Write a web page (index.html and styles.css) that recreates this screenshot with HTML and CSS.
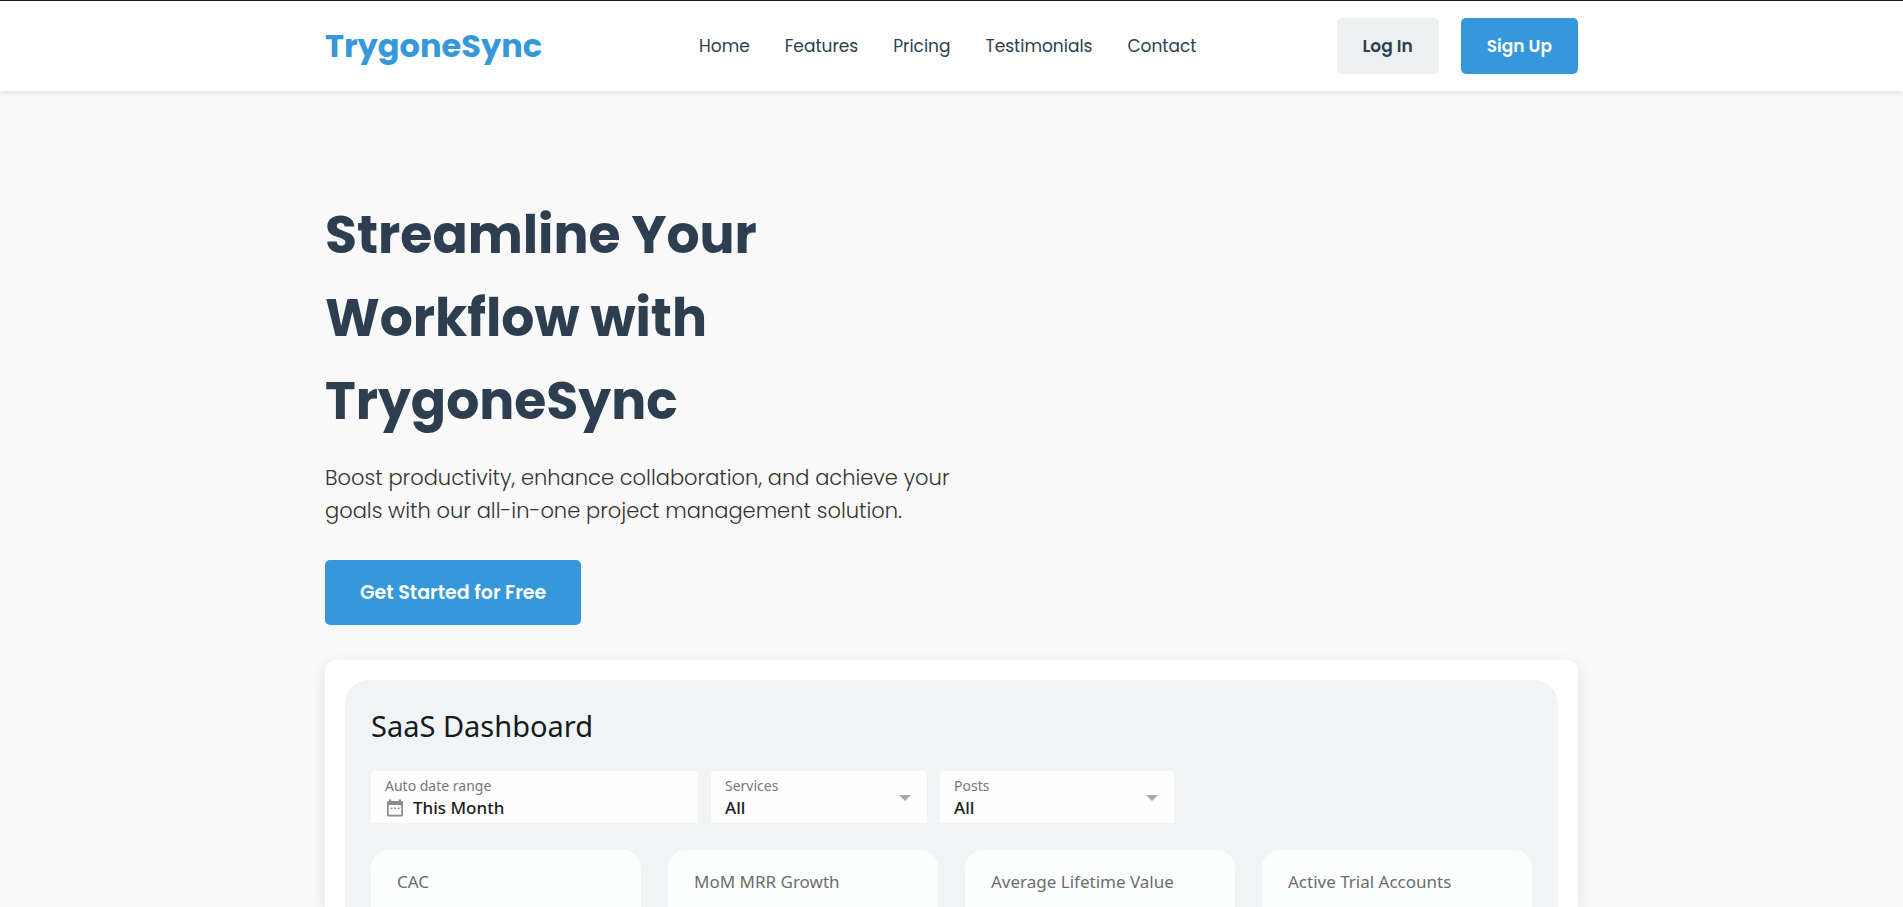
FILE: index.html
```html
<!DOCTYPE html>
<html lang="en">
<head>
<meta charset="utf-8">
<meta name="viewport" content="width=device-width, initial-scale=1">
<title>TrygoneSync</title>
<link rel="stylesheet" href="styles.css">
</head>
<body>
<header class="site-header">
  <div class="container header-row">
    <a class="logo" href="#">TrygoneSync</a>
    <nav aria-label="Main">
      <ul class="nav-list">
        <li><a href="#">Home</a></li>
        <li><a href="#">Features</a></li>
        <li><a href="#">Pricing</a></li>
        <li><a href="#">Testimonials</a></li>
        <li><a href="#">Contact</a></li>
      </ul>
    </nav>
    <div class="auth">
      <button class="btn btn-light" type="button">Log In</button>
      <button class="btn btn-primary" type="button">Sign Up</button>
    </div>
  </div>
</header>
<main class="container hero">
  <div class="hero-text">
    <h1>Streamline Your Workflow with TrygoneSync</h1>
    <p>Boost productivity, enhance collaboration, and achieve your goals with our all-in-one project management solution.</p>
    <a class="btn btn-primary btn-large" href="#">Get Started for Free</a>
  </div>
  <section class="preview" aria-labelledby="dash-title">
    <div class="dashboard">
      <h2 id="dash-title">SaaS Dashboard</h2>
      <div class="filters">
        <div class="field field-date">
          <label for="range">Auto date range</label>
          <div class="field-value">
            <svg class="calendar" viewBox="0 0 16 18" aria-hidden="true"><path fill="#8b8b8b" fill-rule="evenodd" d="M2 0.500h2.200v1.500h7.600V.5H14V2h.5A1.500 1.500 0 0 1 16 3.500v12.500a1.500 1.500 0 0 1-1.500 1.500h-13A1.500 1.500 0 0 1 0 16V3.500A1.500 1.500 0 0 1 1.500 2H2zM1.700 6v9.800h12.600V6z"/><path fill="#8b8b8b" d="M3.500 8.500h2V10h-2zM7 8.500h2V10H7zM10.500 8.500h2V10h-2z"/></svg>
            <button id="range" type="button">This Month</button>
          </div>
        </div>
        <div class="field field-services">
          <label for="services">Services</label>
          <select id="services"><option>All</option></select>
          <svg class="caret" viewBox="0 0 12 6" aria-hidden="true"><path fill="#a8a8a8" d="M0 0h12L6 6z"/></svg>
        </div>
        <div class="field field-posts">
          <label for="posts">Posts</label>
          <select id="posts"><option>All</option></select>
          <svg class="caret" viewBox="0 0 12 6" aria-hidden="true"><path fill="#a8a8a8" d="M0 0h12L6 6z"/></svg>
        </div>
      </div>
      <div class="metrics">
        <h3 class="metric">CAC</h3>
        <h3 class="metric">MoM MRR Growth</h3>
        <h3 class="metric">Average Lifetime Value</h3>
        <h3 class="metric">Active Trial Accounts</h3>
      </div>
    </div>
  </section>
</main>
</body>
</html>
```
FILE: styles.css
```css
* { box-sizing: border-box; margin: 0; padding: 0; }

body {
  display: flex;
  flex-direction: column;
  min-height: 100vh;
  background: #f9f9f9;
  color: #333;
  font-family: Poppins, Inter, "Liberation Sans", sans-serif;
  font-size: 17px;
  line-height: 26px;
}

a { text-decoration: none; }
button, select { font: inherit; border: 0; }

.container { width: 100%; max-width: 1253px; margin: 0 auto; }

.site-header {
  border-top: 1px solid #1c1b22;
  background: #fff;
  box-shadow: 0 2px 5px rgba(0, 0, 0, 0.1);
}
.header-row {
  display: flex;
  align-items: center;
  justify-content: space-between;
  padding: 17px 0;
}
.logo { color: #3498db; font-size: 32px; font-weight: 700; line-height: 56px; }
.nav-list { display: flex; list-style: none; }
.nav-list li { margin-left: 35px; }
.nav-list a { color: #2c3e50; }
.auth { display: flex; gap: 22px; padding-left: 18px; }

.btn {
  display: inline-block;
  padding: 15px 26px;
  border-radius: 5px;
  font-weight: 600;
  cursor: pointer;
}
.btn-light { background: #ecf0f1; color: #2c3e50; }
.btn-primary { background: #3498db; color: #fff; }
.btn-large { padding: 19px 35px; font-size: 19px; line-height: 27px; }

.hero { display: flex; flex: 1; flex-direction: column; padding-top: 102px; }
.hero-text { max-width: 627px; }
h1 { color: #2c3e50; font-size: 52px; font-weight: 700; line-height: 83px; }
.hero-text p { margin: 19px 0 33px; font-size: 21px; font-weight: 300; line-height: 33px; }

.preview {
  display: flex;
  flex: 1;
  margin-top: 35px;
  padding: 20px 20px 0;
  border-radius: 10px 10px 0 0;
  background: #fff;
  box-shadow: 0 5px 15px rgba(0, 0, 0, 0.1);
}
.dashboard {
  display: flex;
  flex: 1;
  flex-direction: column;
  padding: 26px 26px 0;
  border-radius: 24px 24px 0 0;
  background: #f0f4f5;
  font-family: "Noto Sans", sans-serif;
}
h2 { color: #151a1c; font-size: 29px; font-weight: 400; line-height: 40px; }
.filters { display: flex; gap: 13px; margin: 25px 0 27px; }
.field {
  position: relative;
  padding: 5px 14px 4px;
  border-radius: 4px 4px 0 0;
  background: #fefefe;
}
.field-date { flex: 0 1 327px; }
.field-services { flex: 0 1 216px; }
.field-posts { flex: 0 1 234px; }
.field label { display: block; color: #777; font-size: 14px; line-height: 20px; }
.field-value { display: flex; align-items: center; gap: 10px; padding-left: 2px; }
.field button, .field select {
  display: block;
  appearance: none;
  background: transparent;
  color: #1c1c1c;
  font-size: 17px;
  font-weight: 500;
  line-height: 23px;
}
.field select { width: 100%; }
.calendar { width: 16px; height: 18px; }
.caret { position: absolute; top: 24px; right: 16px; width: 12px; height: 6px; pointer-events: none; }

.metrics { display: grid; flex: 1; grid-template-columns: repeat(4, 1fr); gap: 27px; }
.metric {
  padding: 20px 26px 0;
  border-radius: 18px 18px 0 0;
  background: #fdfefe;
  color: #6c6c6c;
  font-size: 17px;
  font-weight: 400;
  line-height: 24px;
}
```
